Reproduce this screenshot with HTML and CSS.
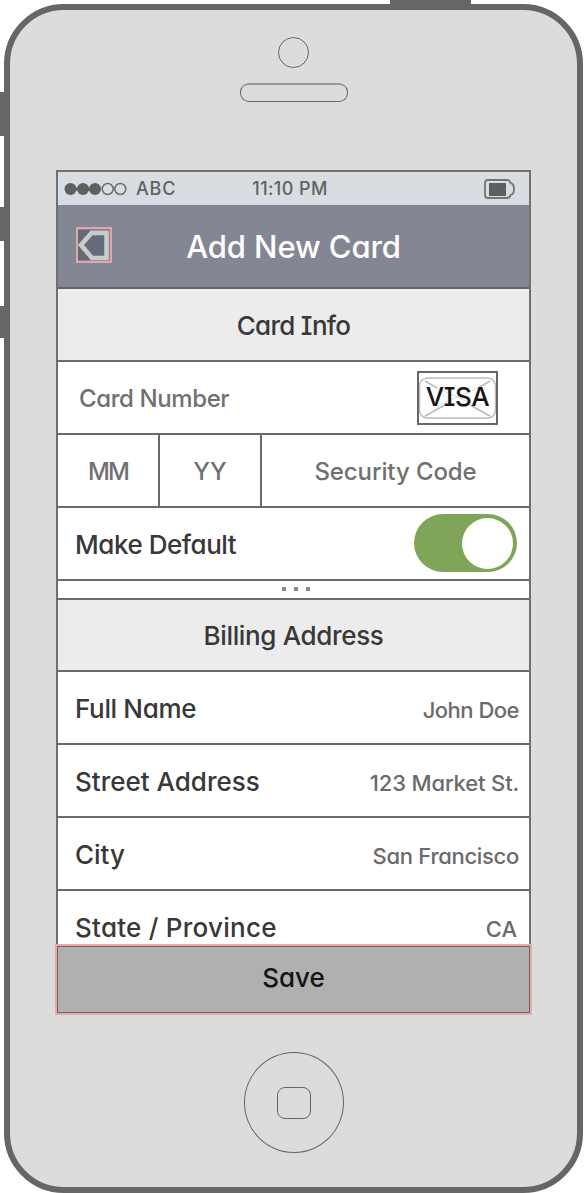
FILE: index.html
```html
<!DOCTYPE html>
<html lang="en">
<head>
<meta charset="utf-8">
<title>Add New Card</title>
<link rel="stylesheet" href="styles.css">
</head>
<body>
<div class="phone">
  <span class="key key-power"></span>
  <span class="key key-mute"></span>
  <span class="key key-up"></span>
  <span class="key key-down"></span>
  <div class="camera"></div>
  <div class="speaker"></div>
  <main class="screen">
    <div class="status">
      <div class="carrier">
        <svg width="63" height="14" viewBox="0 0 63 14"><path d="M6 7h26" stroke="#5e6060" stroke-width="3"/><g fill="#5e6060"><circle cx="6.5" cy="7" r="6"/><circle cx="19" cy="7" r="6"/><circle cx="31" cy="7" r="6"/></g><g fill="none" stroke="#6a6c6d" stroke-width="1.5"><circle cx="43.700" cy="7" r="5.500"/><circle cx="56.300" cy="7" r="5.500"/></g></svg>
        <span class="t-abc">ABC</span>
      </div>
      <span class="t-time">11:10 PM</span>
      <svg class="battery" width="33" height="22" viewBox="0 0 33 22"><path d="M5 2h19q3 0 3.500 3l2 1q1.500 1 1.500 5t-1.500 5l-2 1q-.5 3-3.500 3h-19q-3 0-3-3V5q0-3 3-3z" fill="none" stroke="#727576" stroke-width="1.800"/><path d="M6 5h17v13H6z" fill="#5e6060"/></svg>
    </div>
    <header class="bar">
      <a class="back"><svg width="32" height="32" viewBox="0 0 32 32"><path d="M0 16 13 1H0zM0 16 13 31H0z" fill="#636a78"/><path d="M3 16 13.500 4H28.500v25H14z" fill="#646b79" stroke="#cbcbcb" stroke-width="4.500"/></svg></a>
      <h1 class="t-title">Add New Card</h1>
    </header>
    <h2 class="row head"><span class="t-info">Card Info</span></h2>
    <div class="row number">
      <span class="t-number">Card Number</span>
      <div class="visa"><svg width="77" height="50" viewBox="0 0 77 50"><rect x=".5" y="5" width="76" height="40" rx="8" fill="none" stroke="#bbb" stroke-width="1.500"/><path d="M6 8l12 7M71 8l-12 7M6 43l20-11M71 43l-20-11" stroke="#bbb" stroke-width="1.500"/><path d="M18 15l41 18M59 15L18 33" stroke="#ddd"/></svg><b class="t-visa">VISA</b></div>
    </div>
    <div class="row split">
      <div class="cell"><span class="t-mm">MM</span></div>
      <div class="cell"><span class="t-yy">YY</span></div>
      <div class="cell wide"><span class="t-code">Security Code</span></div>
    </div>
    <div class="row toggle-row"><span class="label t-default">Make Default</span><span class="toggle"><i></i></span></div>
    <div class="dots"><i></i><i></i><i></i></div>
    <h2 class="row head billing"><span class="t-bill">Billing Address</span></h2>
    <div class="row"><span class="label t-name">Full Name</span><span class="value t-john">John Doe</span></div>
    <div class="row"><span class="label t-street">Street Address</span><span class="value t-market">123 Market St.</span></div>
    <div class="row"><span class="label t-city">City</span><span class="value t-sf">San Francisco</span></div>
    <div class="row"><span class="label t-state">State / Province</span><span class="value t-ca">CA</span></div>
  </main>
  <button class="save"><span class="t-save">Save</span></button>
  <div class="home"><div class="home-mark"></div></div>
</div>
</body>
</html>
```
FILE: styles.css
```css
* { box-sizing: border-box; }
body {
  margin: 0;
  padding: 4px 0 0 4px;
  width: 587px;
  height: 1193px;
  overflow: hidden;
  background: #fff;
  color: #383838;
  font-family: Inter, "Liberation Sans", sans-serif;
  font-feature-settings: "cv11", "cv08";
  font-weight: 500;
}
h1, h2 { margin: 0; font-weight: 500; }
.phone {
  position: relative;
  display: flex;
  flex-direction: column;
  align-items: center;
  width: 579px;
  height: 1189px;
  border: 6px solid #666;
  border-radius: 60px;
  background: #dcdcdc;
  padding-top: 27px;
}
.key { position: absolute; background: #666; }
.key-power { left: 380px; top: -10px; width: 81px; height: 6px; }
.key-mute, .key-up, .key-down { left: -10px; width: 6px; }
.key-mute { top: 82px; height: 44px; }
.key-up { top: 197px; height: 34px; }
.key-down { top: 296px; height: 32px; }
.camera { flex: none; width: 31px; height: 31px; border: 1.500px solid #666; border-radius: 50%; }
.speaker { flex: none; width: 108px; height: 19px; margin-top: 15px; border: 1.500px solid #666; border-top: 2px solid #999; border-radius: 9px; }
.screen {
  flex: none;
  width: 475px;
  height: 774px;
  margin-top: 68px;
  border: 2px solid #707070;
  border-bottom: 0;
  background: #fff;
  overflow: hidden;
}
.status {
  display: grid;
  grid-template-columns: 1fr auto 1fr;
  align-items: center;
  height: 33px;
  padding: 0 13px 0 6px;
  background: #d8dde1;
  color: #606264;
  font-size: 18px;
}
.carrier { display: flex; align-items: center; gap: 9px; }
.battery { justify-self: end; }
.bar {
  display: grid;
  grid-template-columns: 36px 1fr 36px;
  align-items: center;
  height: 84px;
  padding: 0 18px;
  border-bottom: 2px solid #666;
  background: #838793;
  color: #fff;
}
.back { display: block; width: 36px; height: 36px; border: 2px solid #e2a5a8; margin-top: -3px; }
.back svg { display: block; }
.bar h1 { font-size: 31px; font-weight: 500; text-align: center; }
.row {
  display: flex;
  align-items: center;
  justify-content: space-between;
  height: 73px;
  padding: 0 10px 0 17px;
  border-bottom: 2px solid #6a6a6a;
}
.head { justify-content: center; padding: 0; background: #ececec; font-size: 27px; }
.head span { padding-top: 1px; font-size: 26px; }
.billing { height: 72px; }
.number { padding: 0 31px 0 21px; color: #707070; font-size: 24px; }
.t-number { padding-top: 2px; }
.visa { display: grid; place-items: center; width: 81px; height: 54px; border: 2px solid #666; }
.visa svg, .visa b { grid-area: 1 / 1; }
.visa b { z-index: 1; margin-top: -3px; color: #151515; font-size: 26px; font-weight: 500; }
.split { padding: 0; color: #707070; font-size: 24px; align-items: stretch; }
.cell { display: grid; place-items: center; width: 102px; border-right: 2px solid #6a6a6a; padding-top: 2px; }
.wide { flex: 1; border-right: 0; }
.label { padding-top: 2px; font-size: 26px; }
.value { padding-top: 4px; color: #6a6a6a; font-size: 22px; }
.toggle { display: flex; align-items: center; justify-content: flex-end; width: 103px; height: 58px; padding-right: 4px; border-radius: 29px; background: #7fa658; margin: -1px 2px 0 0; }
.toggle i { width: 51px; height: 51px; border-radius: 50%; background: #fff; }
.dots { display: flex; align-items: center; justify-content: center; gap: 8px; height: 19px; border-bottom: 2px solid #6a6a6a; padding: 0 0 2px 4px; }
.dots i { width: 4px; height: 4px; background: #888; }
.save {
  flex: none;
  width: 477px;
  height: 71px;
  padding: 0 0 4px;
  border: 0;
  box-shadow: inset 0 0 0 2px #e6aaaa, inset 0 0 0 3px #755f5f;
  background: #b0b0b0;
  color: #151515;
  font: inherit;
  font-size: 26px;
}
.home { flex: none; display: grid; place-items: center; width: 100px; height: 101px; margin-top: 37px; border: 1.500px solid #666; border-radius: 50%; }
.home-mark { width: 34px; height: 32px; border: 1.500px solid #666; border-radius: 8px; }

/* Per-text tracking */
.t-abc { letter-spacing: .8px; }
.t-time { letter-spacing: .4px; }
.t-title { letter-spacing: -.1px; }
.t-info { letter-spacing: -.7px; }
.t-number { letter-spacing: -.4px; }
.t-visa { letter-spacing: -.5px; }
.t-mm { letter-spacing: -2px; }
.t-code { letter-spacing: -.1px; }
.t-default { letter-spacing: -.45px; }
.t-bill { letter-spacing: -.35px; }
.t-name { letter-spacing: -.35px; }
.t-state { letter-spacing: .25px; }
.t-john { letter-spacing: -.5px; }
.t-market { letter-spacing: -.15px; }
.t-sf { letter-spacing: -.3px; }
.t-ca { padding-right: 2px; }
```
